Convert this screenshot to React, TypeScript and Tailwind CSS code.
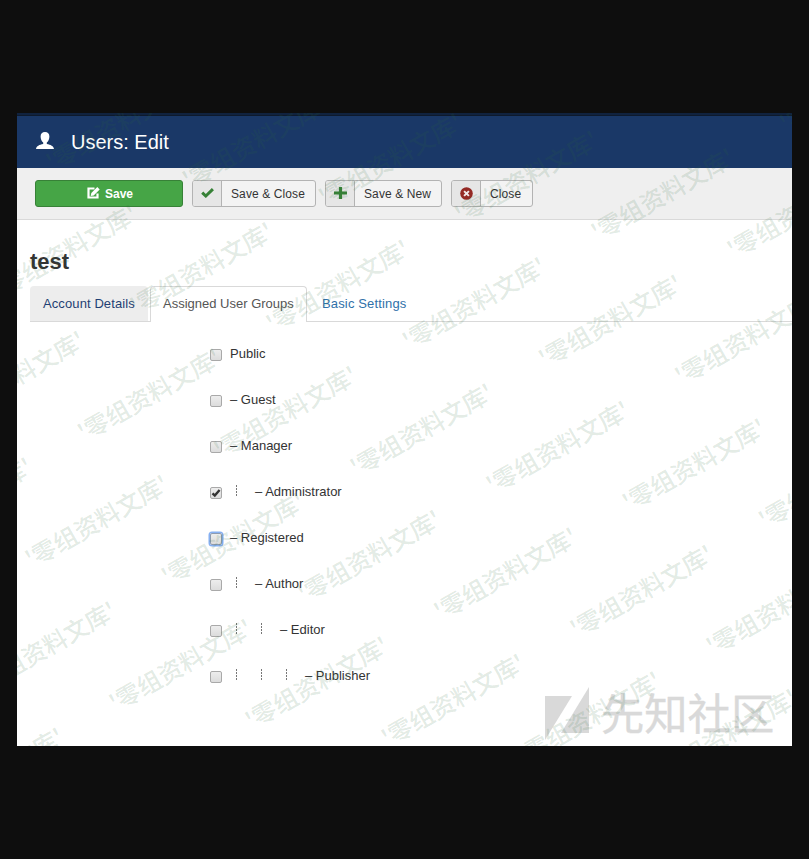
import React from 'react';

const FONT = "font-['Liberation_Sans',Arial,sans-serif]";

type Group = { name: string; depth: number; dash: boolean; checked?: boolean; focused?: boolean };

const groups: Group[] = [
  { name: 'Public', depth: 0, dash: false },
  { name: 'Guest', depth: 0, dash: true },
  { name: 'Manager', depth: 0, dash: true },
  { name: 'Administrator', depth: 1, dash: true, checked: true },
  { name: 'Registered', depth: 0, dash: true, focused: true },
  { name: 'Author', depth: 1, dash: true },
  { name: 'Editor', depth: 2, dash: true },
  { name: 'Publisher', depth: 3, dash: true },
];

function UserIcon() {
  return (
    <svg width="18" height="17" viewBox="0 0 18 17" fill="#fff" className="mb-[3px]">
      <path d="M9 0C6.200 0 4.600 1.700 4.600 4.400c0 2.500 1 4.800 2.600 6v1.500C3.400 12.700.4 13.800 0 17h18c-.4-3.200-3.400-4.300-7.200-5.100v-1.500c1.600-1.200 2.600-3.500 2.600-6C13.400 1.700 11.800 0 9 0z" />
    </svg>
  );
}

function EditIcon() {
  return (
    <svg width="13" height="12" viewBox="0 0 13 12" className="mb-[2px]">
      <path d="M7.500 1.500H1.500v9h9V6.500" fill="none" stroke="#fff" strokeWidth="2.200" />
      <path d="M3.700 8.900l.6-2.900L10.300 0l2.400 2.400-6 6z" fill="#fff" />
    </svg>
  );
}

function CheckIcon() {
  return (
    <svg width="13" height="10" viewBox="0 0 13 10" className="mb-[2px]">
      <path d="M1.200 4.700l3.600 3.300L11.900 1.200" fill="none" stroke="#378137" strokeWidth="3" />
    </svg>
  );
}

function PlusIcon() {
  return (
    <svg width="13" height="12" viewBox="0 0 13 12" className="mb-[2px]">
      <path d="M6.500 0v12M0 6h13" stroke="#378137" strokeWidth="3.200" />
    </svg>
  );
}

function CancelIcon() {
  return (
    <svg width="13" height="13" viewBox="0 0 13 13" className="mb-px">
      <circle cx="6.500" cy="6.500" r="6.300" fill="#942a25" />
      <path d="M4.100 4.100l4.800 4.800M8.900 4.100L4.100 8.900" stroke="#f0e6e6" strokeWidth="2" />
    </svg>
  );
}

function ToolButton({ icon, label, width }: { icon: React.ReactNode; label: string; width: string }) {
  return (
    <button className={`flex h-[27px] overflow-hidden rounded-[3px] border border-[#b3b3b3] bg-[#f3f3f3] text-[12px] text-[#333] ${width}`}>
      <span className="flex h-full w-[29px] shrink-0 items-center justify-center border-r border-[#b3b3b3] bg-[#e6e6e6]">{icon}</span>
      <span className="flex h-full flex-1 items-center whitespace-nowrap pl-[9px] tracking-[0.1px]">{label}</span>
    </button>
  );
}

function Checkbox({ checked, focused }: { checked?: boolean; focused?: boolean }) {
  return (
    <span
      className={`mt-1 flex h-3 w-3 shrink-0 items-center justify-center rounded-[2px] border bg-gradient-to-b from-[#ededed] to-[#dcdcdc] ${
        focused ? 'border-[#8e9bb0] ring-[1.5px] ring-[#86b0f2]' : 'border-[#a9a9a9]'
      }`}
    >
      {checked && (
        <svg width="10" height="10" viewBox="0 0 10 10" className="shrink-0">
          <path d="M1.500 5.400l2.300 2.200L8.600 2" fill="none" stroke="#333" strokeWidth="2.400" />
        </svg>
      )}
    </span>
  );
}

function GroupRow({ group }: { group: Group }) {
  return (
    <li className="flex h-[46px] items-start">
      <Checkbox checked={group.checked} focused={group.focused} />
      <span className="ml-2 flex leading-[18px]">
        {Array.from({ length: group.depth }, (_, i) => (
          <span key={i} className="w-[25px] pl-[6px] pt-[2px]">
            <svg width="1" height="11" viewBox="0 0 1 11">
              <path d="M.5 0v11" stroke="#777" strokeDasharray="2 1" />
            </svg>
          </span>
        ))}
        <span>
          {group.dash ? '– ' : ''}
          {group.name}
        </span>
      </span>
    </li>
  );
}

const marks = Array.from({ length: 9 }, (_, r) => r - 4)
  .flatMap((row) =>
    Array.from({ length: 14 }, (_, c) => c - 5).map((col) => ({
      x: 80 + col * 136.2 - row * 52.4,
      y: 408.5 + col * 17.5 + row * 126.4,
    })),
  )
  .filter((m) => m.x > -66 && m.x < 838 && m.y > -36 && m.y < 668);

function Watermark() {
  return (
    <svg className="pointer-events-none absolute inset-0" width="775" height="633" viewBox="0 0 775 633">
      {marks.map((m, i) => (
        <text
          key={i}
          transform={`translate(${m.x} ${m.y}) rotate(-29.6)`}
          textAnchor="middle"
          y="9"
          fontSize="24.2"
          fontWeight="500"
          fill="#2d6b3c"
          fillOpacity="0.15"
          fontFamily="'Noto Sans CJK SC', sans-serif"
        >
          '零组资料文库'
        </text>
      ))}
    </svg>
  );
}

function SiteLogo() {
  return (
    <div className="absolute left-[528px] top-[574px] flex items-start text-[#d9d9d9]">
      <svg width="44" height="54" viewBox="0 0 44 54" fill="#d9d9d9">
        <path d="M0 9h27L0 53z" />
        <path d="M44 0v46H16z" />
      </svg>
      <span className="-mt-[2px] ml-[12px] whitespace-nowrap font-['Noto_Sans_CJK_SC',sans-serif] text-[43.3px] leading-[52px] [-webkit-text-stroke:0.4px_#d9d9d9]">
        先知社区
      </span>
    </div>
  );
}

export default function App() {
  return (
    <div className={`h-[859px] w-[809px] bg-[#0e0e0e] px-[17px] pt-[113px] text-[13px] text-[#333] ${FONT}`}>
      <main className="relative h-[633px] w-[775px] overflow-hidden bg-white">
        <div className="h-[3px] border-b border-[#0e1a2c] bg-[#10223e]" />
        <header className="flex h-[52px] items-center bg-[#1a3867] pl-[19px] text-white">
          <UserIcon />
          <h1 className="ml-[17px] text-[20px] leading-none">Users: Edit</h1>
        </header>
        <div className="flex h-[52px] gap-[9px] border-b border-[#d9d9d9] bg-[#efefef] pl-[18px] pt-3">
          <button className="flex h-[27px] w-[148px] items-center justify-center gap-[5px] rounded-[3px] border border-[#378137] bg-[#46a546] pl-[2px] text-[12px] font-bold text-white">
            <EditIcon />
            Save
          </button>
          <ToolButton icon={<CheckIcon />} label="Save & Close" width="w-[124px]" />
          <ToolButton icon={<PlusIcon />} label="Save & New" width="w-[117px]" />
          <ToolButton icon={<CancelIcon />} label="Close" width="w-[82px]" />
        </div>
        <h2 className="mt-[24px] pl-[13px] text-[22px] font-bold leading-[36px]">test</h2>
        <nav className="ml-[13px] mt-[6px] flex h-[36px] border-b border-[#d9d9d9] leading-[34px]">
          <a className="h-[35px] w-[118px] rounded-t-[4px] bg-[#ededed] pl-[13px] pt-px tracking-[0.1px] text-[#1f3f73]">Account Details</a>
          <a className="ml-[2px] h-[36px] w-[157px] rounded-t-[4px] border border-b-0 border-[#d9d9d9] bg-white pl-3 text-[#555]">Assigned User Groups</a>
          <a className="ml-[2px] px-[13px] pt-px tracking-[0.15px] text-[#3071a9]">Basic Settings</a>
        </nav>
        <ul className="pl-[193px] pt-[23px]">
          {groups.map((g) => (
            <GroupRow key={g.name} group={g} />
          ))}
        </ul>
        <SiteLogo />
        <Watermark />
      </main>
    </div>
  );
}
